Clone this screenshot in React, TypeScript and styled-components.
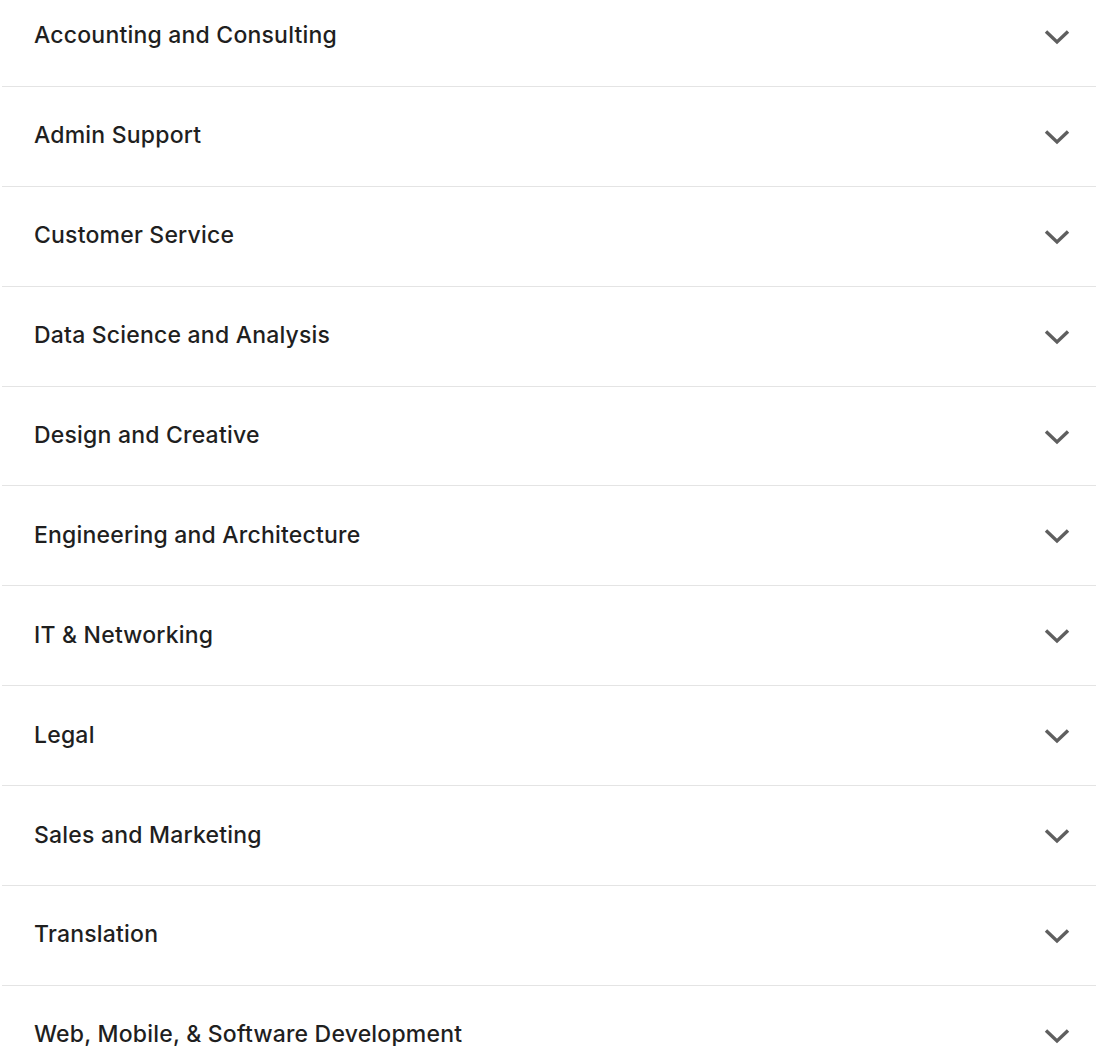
import React from "react";
import styled, { createGlobalStyle } from "styled-components";

const GlobalStyle = createGlobalStyle`
  html, body {
    margin: 0;
    padding: 0;
    background: #ffffff;
  }
  body {
    font-family: Inter, "Helvetica Neue", Arial, sans-serif;
    -webkit-font-smoothing: antialiased;
  }
`;

const categories = [
  "Accounting and Consulting",
  "Admin Support",
  "Customer Service",
  "Data Science and Analysis",
  "Design and Creative",
  "Engineering and Architecture",
  "IT & Networking",
  "Legal",
  "Sales and Marketing",
  "Translation",
  "Web, Mobile, & Software Development",
];

const List = styled.ul`
  list-style: none;
  margin: -13px 0 0 2px;
  padding: 0;
`;

const Row = styled.li`
  box-sizing: border-box;
  height: 99.9px;
  display: flex;
  align-items: center;
  justify-content: space-between;
  padding: 0 26px 2px 32px;
  border-bottom: 1px solid #e4e4e4;
  cursor: pointer;
`;

const Title = styled.span`
  font-size: 23px;
  line-height: 28px;
  font-weight: 500;
  color: #1f1f1f;
  letter-spacing: 0.2px;
`;

const Icon = styled.svg`
  display: block;
  margin-top: 3px;
  flex-shrink: 0;
`;

const Chevron = () => (
  <Icon width="26" height="16" viewBox="0 0 26 16" fill="none">
    <path
      d="M2 2.5 L13 13 L24 2.5"
      stroke="#5f5f5f"
      strokeWidth="3.4"
      strokeLinecap="butt"
      strokeLinejoin="miter"
    />
  </Icon>
);

export default function App() {
  return (
    <>
      <GlobalStyle />
      <List>
        {categories.map((c) => (
          <Row key={c}>
            <Title>{c}</Title>
            <Chevron />
          </Row>
        ))}
      </List>
    </>
  );
}
